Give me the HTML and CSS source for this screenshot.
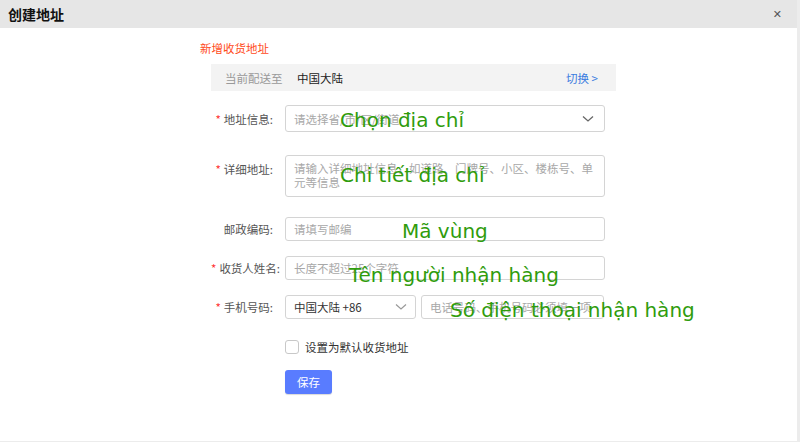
FILE: index.html
```html
<!DOCTYPE html>
<html lang="zh-CN">
<head>
<meta charset="utf-8">
<title>创建地址</title>
<link rel="stylesheet" href="styles.css">
</head>
<body>
<div class="dialog">
  <div class="header">
    <span class="header-title">创建地址</span>
    <span class="close">&#x2715;</span>
  </div>
  <div class="content">
    <div class="section-title">新增收货地址</div>
    <div class="ship-bar">
      <span class="ship-label">当前配送至</span>
      <span class="ship-value">中国大陆</span>
      <span class="ship-switch">切换 &gt;</span>
    </div>
    <div class="form">
      <div class="row row-addr">
        <label class="label"><span class="req">*</span>地址信息:</label>
        <div class="field select">
          <span class="ph">请选择省/市/区/街道</span>
          <svg class="chev" width="12" height="8" viewBox="0 0 12 8"><path d="M1 1.5 L6 6 L11 1.5" fill="none" stroke="#666" stroke-width="1.3"/></svg>
        </div>
      </div>
      <div class="row row-detail">
        <label class="label label-top"><span class="req">*</span>详细地址:</label>
        <div class="field textarea"><span class="ph">请输入详细地址信息，如道路、门牌号、小区、楼栋号、单元等信息</span></div>
      </div>
      <div class="row row-zip">
        <label class="label">邮政编码:</label>
        <div class="field"><span class="ph">请填写邮编</span></div>
      </div>
      <div class="row row-name">
        <label class="label"><span class="req">*</span>收货人姓名:</label>
        <div class="field"><span class="ph">长度不超过25个字符</span></div>
      </div>
      <div class="row row-phone">
        <label class="label"><span class="req">*</span>手机号码:</label>
        <div class="phone-group">
          <div class="field code">
            <span class="val">中国大陆 +86</span>
            <svg class="chev" width="12" height="8" viewBox="0 0 12 8"><path d="M1 1.5 L6 6 L11 1.5" fill="none" stroke="#999" stroke-width="1.2"/></svg>
          </div>
          <div class="field phone"><span class="ph">电话号码、手机号码必须填一项</span></div>
        </div>
      </div>
      <div class="row row-check">
        <span class="label"></span>
        <label class="check"><span class="box"></span>设置为默认收货地址</label>
      </div>
      <div class="row row-btn">
        <span class="label"></span>
        <button class="save">保存</button>
      </div>
    </div>
  </div>
  <div class="note n1">Chọn địa chỉ</div>
  <div class="note n2">Chi tiết địa chỉ</div>
  <div class="note n3">Mã vùng</div>
  <div class="note n4">Tên người nhận hàng</div>
  <div class="note n5">Số điện thoại nhận hàng</div>
</div>
</body>
</html>
```
FILE: styles.css
```css
html, body {
  margin: 0;
  padding: 0;
  background: #ececec;
}
body {
  width: 800px;
  height: 442px;
  overflow: hidden;
  font-family: "Noto Sans CJK SC", "Noto Sans", sans-serif;
  font-size: 11.5px;
  color: #333;
}
.dialog {
  position: relative;
  width: 797px;
  height: 441px;
  background: #fff;
}
.header {
  height: 28px;
  background: #e6e6e6;
  display: flex;
  align-items: center;
  justify-content: space-between;
  padding: 0 15px 0 8px;
}
.header-title {
  font-size: 14px;
  font-weight: bold;
  color: #111;
}
.close {
  font-family: "DejaVu Sans", sans-serif;
  font-size: 11px;
  font-weight: bold;
  color: #555;
}
.content {
  padding: 13px 0 0 200px;
}
.section-title {
  color: #ff4a1a;
  line-height: 14px;
  height: 14px;
}
.ship-bar {
  margin: 9px 0 0 11px;
  width: 405px;
  height: 27px;
  box-sizing: border-box;
  background: #f3f3f3;
  display: flex;
  align-items: center;
  padding: 0 18px 0 14px;
}
.ship-label {
  color: #999;
  width: 72px;
}
.ship-value {
  color: #222;
}
.ship-switch {
  margin-left: auto;
  color: #3a7be0;
}
.form {
  margin-left: 11px;
}
.row {
  display: flex;
  align-items: center;
}
.label {
  width: 62px;
  flex: none;
  text-align: right;
  margin-right: 12px;
  color: #555;
  white-space: nowrap;
}
.req {
  color: #f33;
  margin-right: 3px;
}
.label-top {
  align-self: flex-start;
  padding-top: 6px;
}
.field {
  box-sizing: border-box;
  width: 320px;
  height: 24px;
  border: 1px solid #d4d4d4;
  border-radius: 3px;
  display: flex;
  align-items: center;
  padding: 0 8px;
  background: #fff;
}
.ph {
  color: #a8a8a8;
}
.val {
  color: #333;
}
.chev {
  margin-left: auto;
}
.row-addr { margin-top: 14px; }
.row-addr .field { height: 27px; }
.row-addr .chev { margin-right: 2px; }
.row-detail { margin-top: 23px; }
.textarea {
  height: 42px;
  align-items: flex-start;
  padding: 5px 8px;
  line-height: 14px;
}
.row-zip { margin-top: 20px; }
.row-name { margin-top: 15px; }
.row-phone { margin-top: 15px; }
.phone-group {
  display: flex;
  gap: 5px;
}
.field.code {
  width: 131px;
}
.field.phone {
  width: 183px;
}
.row-check { margin-top: 20px; }
.check {
  display: flex;
  align-items: center;
  color: #333;
}
.box {
  width: 14px;
  height: 14px;
  box-sizing: border-box;
  border: 1px solid #c8c8c8;
  border-radius: 3px;
  margin-right: 6px;
}
.row-btn { margin-top: 15px; }
.save {
  width: 47px;
  height: 24px;
  border: none;
  border-radius: 3px;
  background: #597cff;
  color: #fff;
  font-family: "Noto Sans CJK SC", sans-serif;
  font-size: 11.5px;
  padding: 0;
  box-shadow: 0 1px 1px rgba(0,0,0,0.15);
}
.note {
  position: absolute;
  font-family: "DejaVu Sans", Verdana, sans-serif;
  font-size: 20px;
  line-height: 26px;
  color: #2f9c0c;
  white-space: nowrap;
}
.n1 { left: 340px; top: 107px; }
.n2 { left: 340px; top: 162px; }
.n3 { left: 402px; top: 218px; }
.n4 { left: 349px; top: 262px; }
.n5 { left: 450px; top: 297px; }
```
